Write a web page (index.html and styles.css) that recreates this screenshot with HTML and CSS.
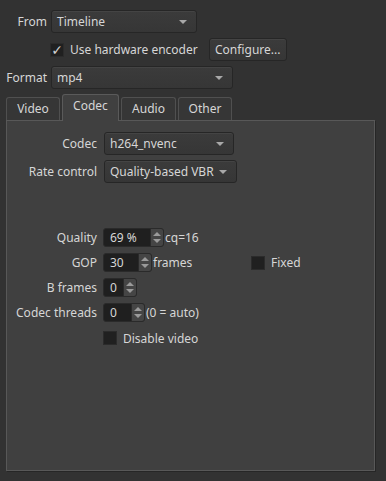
FILE: index.html
```html
<!DOCTYPE html>
<html lang="en">
<head>
    <meta charset="UTF-8">
    <title>Export</title>
    <link rel="stylesheet" href="styles.css">
</head>
<body>
    <div class="top">
        <label class="lbl from-lbl">From</label>
        <div class="combo from-combo">Timeline</div>

        <span></span>
        <div class="hw-row">
            <label class="check"><span class="box checked">&#10003;</span>Use hardware encoder</label>
            <button class="btn">Configure...</button>
        </div>
    </div>
    <div class="format-row">
        <label class="lbl">Format</label>
        <div class="combo format-combo">mp4</div>
    </div>

    <div class="tabs">
        <div class="tab">Video</div>
        <div class="tab active">Codec</div>
        <div class="tab">Audio</div>
        <div class="tab">Other</div>
    </div>

    <div class="panel">
        <div class="form">
            <label class="lbl">Codec</label>
            <div class="combo codec-combo">h264_nvenc</div>
            <label class="lbl">Rate control</label>
            <div class="combo rate-combo">Quality-based VBR</div>
        </div>

        <div class="form lower">
            <label class="lbl">Quality</label>
            <div class="field">
                <div class="spin w60"><span class="val">69 %</span><span class="arrows"></span></div>
                <span>cq=16</span>
            </div>

            <label class="lbl">GOP</label>
            <div class="field">
                <div class="gop-group">
                    <div class="spin w48"><span class="val">30</span><span class="arrows"></span></div>
                    <span>frames</span>
                </div>
                <label class="check"><span class="box"></span>Fixed</label>
            </div>

            <label class="lbl">B frames</label>
            <div class="field">
                <div class="spin w33"><span class="val">0</span><span class="arrows"></span></div>
            </div>

            <label class="lbl">Codec threads</label>
            <div class="field">
                <div class="spin w41"><span class="val">0</span><span class="arrows"></span></div>
                <span>(0 = auto)</span>
            </div>

            <span></span>
            <div class="field">
                <label class="check"><span class="box"></span>Disable video</label>
            </div>
        </div>
    </div>
</body>
</html>
```

FILE: styles.css
```css
body {
    margin: 0;
    padding: 10px 0 0 6px;
    background-color: #323232;
    color: #d6d6d6;
    font-family: "Noto Sans", "Open Sans", sans-serif;
    font-size: 12px;
    height: 481px;
    box-sizing: border-box;
    overflow: hidden;
}
.lbl {
    text-align: right;
    white-space: nowrap;
}
.top {
    display: grid;
    grid-template-columns: 41px 1fr;
    column-gap: 4px;
    row-gap: 5px;
    align-items: center;
}
.format-row {
    display: flex;
    align-items: center;
    gap: 4px;
    margin-top: 5px;
}
.format-row .lbl {
    width: 41px;
}
.combo {
    position: relative;
    height: 23px;
    line-height: 21px;
    box-sizing: border-box;
    padding-left: 5px;
    background: linear-gradient(#3b3b3b, #363636);
    border: 1px solid #262626;
    border-radius: 3px;
    box-shadow: inset 0 1px 0 #444;
}
.combo::after {
    content: "";
    position: absolute;
    right: 9px;
    top: 9px;
    border-left: 4px solid transparent;
    border-right: 4px solid transparent;
    border-top: 4px solid #a8a8a8;
}
.from-combo { width: 146px; }
.format-combo { width: 182px; }
.hw-row {
    display: flex;
    align-items: center;
    gap: 11px;
    margin-left: -1px;
}
.check {
    display: flex;
    align-items: center;
    gap: 6px;
}
.box {
    width: 14px;
    height: 14px;
    box-sizing: border-box;
    background-color: #202020;
    border: 1px solid #2b2b2b;
    color: #d0d0d0;
    font-size: 14px;
    line-height: 13px;
    text-align: center;
    font-family: "DejaVu Sans", sans-serif;
    overflow: hidden;
}
.btn {
    height: 23px;
    width: 78px;
    padding: 0;
    font: inherit;
    color: #d6d6d6;
    background: linear-gradient(#3b3b3b, #363636);
    border: 1px solid #262626;
    border-radius: 3px;
    box-shadow: inset 0 1px 0 #444;
}
.tabs {
    display: flex;
    gap: 2px;
    margin-top: 5px;
    height: 26px;
    align-items: flex-end;
}
.tab {
    height: 23px;
    box-sizing: border-box;
    border: 1px solid #505050;
    border-bottom: none;
    border-radius: 3px 3px 0 0;
    background-color: #363636;
    text-align: center;
    line-height: 22px;
    width: 54px;
}
.tab.active {
    height: 27px;
    width: 57px;
    background-color: #404040;
    border-color: #5a5a5a;
    line-height: 22px;
    position: relative;
    top: 1px;
    z-index: 1;
}
.tab:nth-child(3) { width: 55px; }
.panel {
    width: 369px;
    height: 351px;
    box-sizing: border-box;
    background-color: #404040;
    border: 1px solid #585858;
    box-shadow: 1px 1px 0 #262626;
    padding: 11px 0 0 9px;
}
.form {
    display: grid;
    grid-template-columns: 81px 1fr;
    column-gap: 7px;
    row-gap: 5px;
    align-items: center;
}
.codec-combo { width: 130px; }
.rate-combo { width: 133px; }
.lower {
    margin-top: 45px;
    row-gap: 6px;
    column-gap: 6px;
}
.lower .field {
    display: flex;
    align-items: center;
    height: 19px;
}
.lower .field:last-child {
    height: 20px;
}
.spin {
    display: flex;
    height: 19px;
    box-sizing: border-box;
    background-color: #1f1f1f;
    border: 1px solid #2a2a2a;
    border-radius: 3px;
    margin-right: 1px;
}
.spin .val {
    flex: 1;
    padding-left: 6px;
    line-height: 17px;
}
.arrows {
    position: relative;
    width: 12px;
    background-color: #454545;
    border-left: 1px solid #2a2a2a;
    border-radius: 0 2px 2px 0;
}
.arrows::before,
.arrows::after {
    content: "";
    position: absolute;
    left: 2px;
    border-left: 4px solid transparent;
    border-right: 4px solid transparent;
}
.arrows::before {
    top: 3px;
    border-bottom: 4px solid #9a9a9a;
}
.arrows::after {
    bottom: 3px;
    border-top: 4px solid #9a9a9a;
}
.w60 { width: 61px; }
.w48 { width: 49px; }
.w33 { width: 34px; }
.w41 { width: 42px; }
.gop-group {
    display: flex;
    align-items: center;
    width: 148px;
}
```
